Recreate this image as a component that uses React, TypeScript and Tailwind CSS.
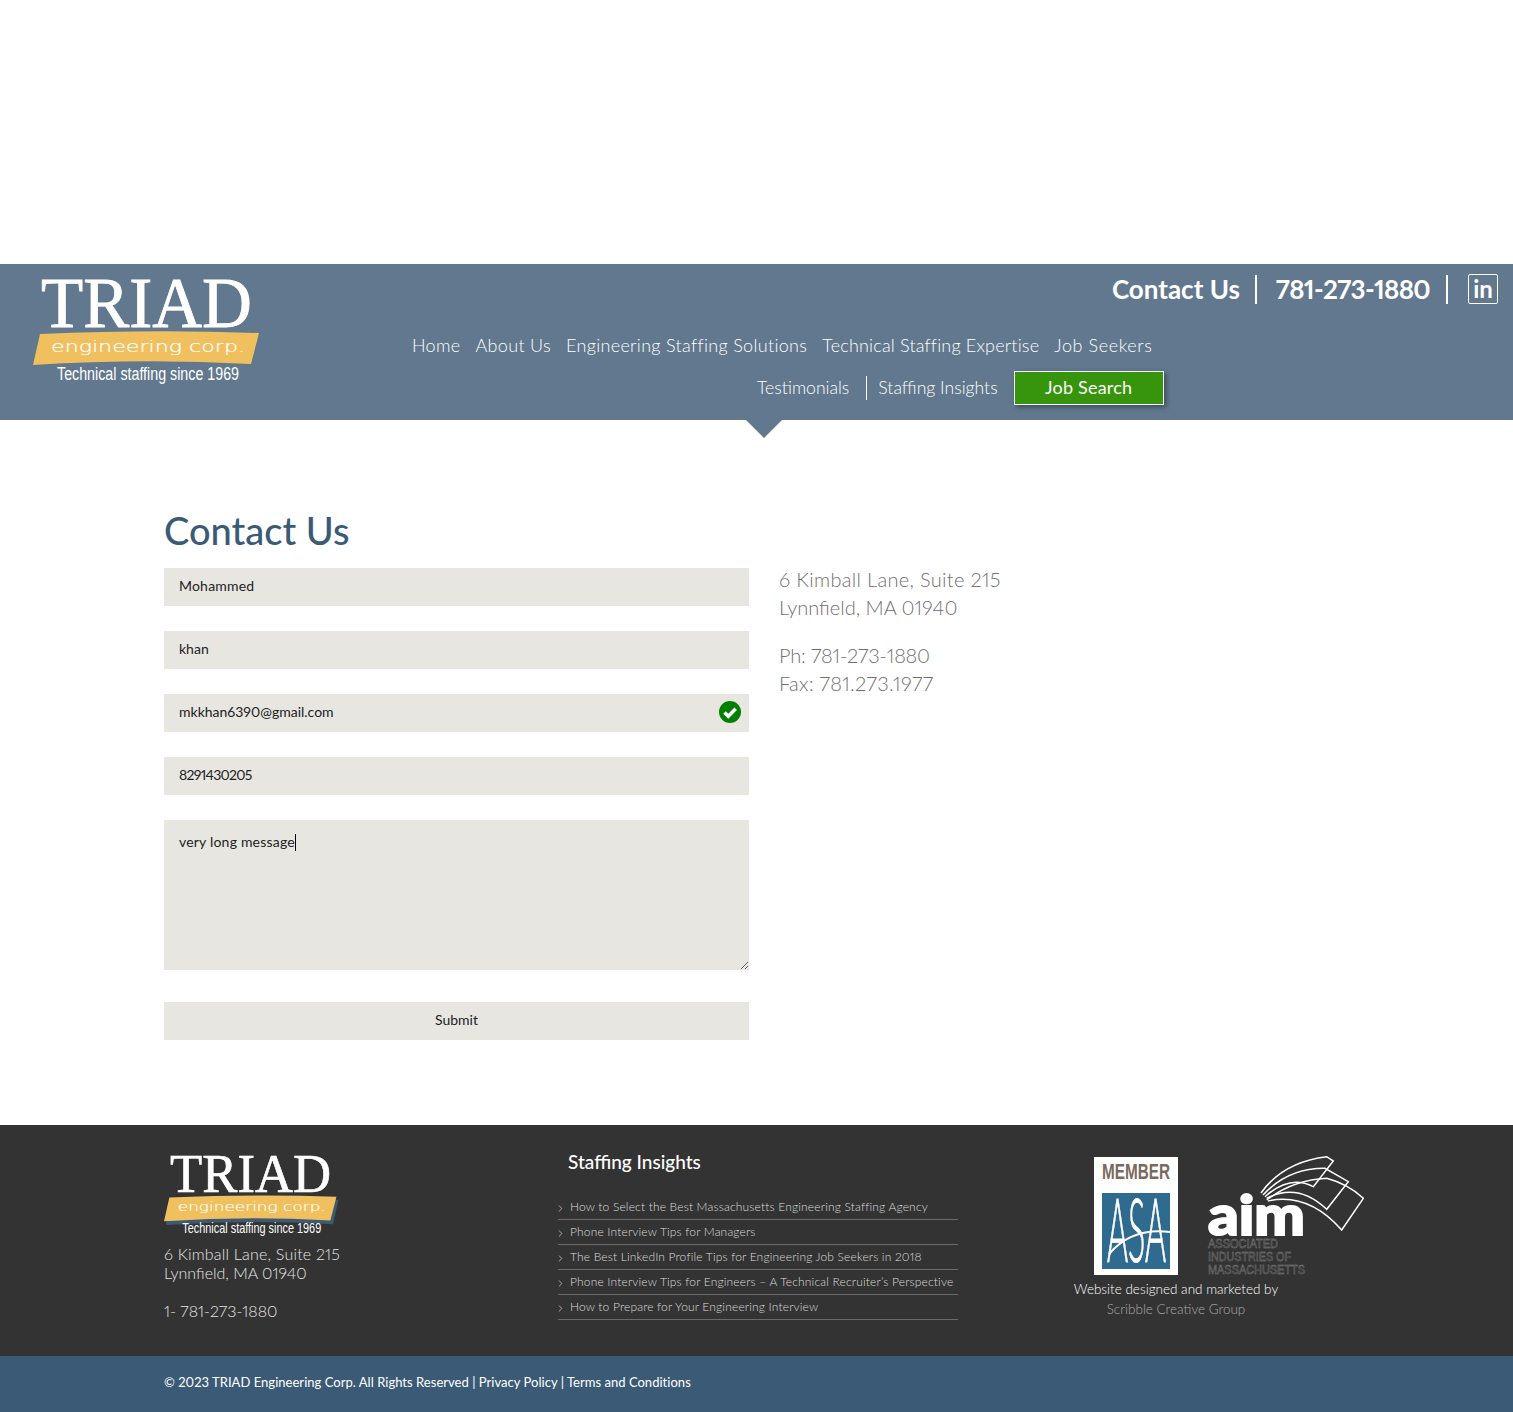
import { ChevronRight } from 'lucide-react'

const nav = [
  { label: 'Home', spacing: 'tracking-[0.32px]' },
  { label: 'About Us', spacing: 'tracking-[0.32px]' },
  { label: 'Engineering Staffing Solutions', spacing: 'tracking-[0.32px]' },
  { label: 'Technical Staffing Expertise', spacing: 'tracking-[0.18px]' },
  { label: 'Job Seekers', spacing: 'tracking-[0.6px]' },
]

const posts = [
  'How to Select the Best Massachusetts Engineering Staffing Agency',
  'Phone Interview Tips for Managers',
  'The Best LinkedIn Profile Tips for Engineering Job Seekers in 2018',
  'Phone Interview Tips for Engineers – A Technical Recruiter’s Perspective',
  'How to Prepare for Your Engineering Interview',
]

const inputClass = 'block h-[38px] w-[585px] bg-[#e7e6e1] px-[15px] pb-[4px] text-[14px] text-[#222] outline-none'

function Logo({ width, shadow }: { width: number; shadow?: boolean }) {
  return (
    <svg width={width} viewBox="0 0 228 106" className="block shrink-0 overflow-visible">
      <text x="8" y="50" fill="#fff" stroke="#fff" strokeWidth="0.8" fontFamily="Liberation Serif" fontSize="71" textLength="211" lengthAdjust="spacingAndGlyphs">TRIAD</text>
      {shadow && <path d="M7 58 Q120 53 227 57 L220 89 Q110 83 1 90 Z" fill="#3b5a75" transform="translate(1.5 3)" />}
      <path d="M7 57 Q120 52 226 56 L218 87 Q110 81 0 88 Z" fill="#f0c05e" />
      <text x="18" y="75" fill="#fff" stroke="#fff" strokeWidth="0.2" fontFamily="DejaVu Sans" fontSize="16" textLength="194" lengthAdjust="spacingAndGlyphs" fontWeight="200">engineering corp.</text>
      <text x="24" y="103" fill="#fff" fontFamily="Liberation Sans" fontSize="18" textLength="182" lengthAdjust="spacingAndGlyphs">Technical staffing since 1969</text>
    </svg>
  )
}

function AsaBadge() {
  return (
    <svg width="84" height="118" viewBox="0 0 84 118" className="mt-[3px] block shrink-0 overflow-visible">
      <rect width="84" height="118" fill="#fff" />
      <text x="8" y="22" fill="#7a6a5e" fontFamily="Liberation Sans" fontWeight="700" fontSize="22" textLength="68" lengthAdjust="spacingAndGlyphs">MEMBER</text>
      <rect x="8" y="36" width="68" height="76" fill="#2f6a8f" />
      <text x="13" y="105" fill="#fff" stroke="#fff" strokeWidth="0.9" fontFamily="Lato" fontWeight="300" fontSize="89" textLength="59" lengthAdjust="spacingAndGlyphs">ASA</text>
      <path d="M15 97 Q38 70 76 75" fill="none" stroke="#fff" strokeWidth="2" />
    </svg>
  )
}

function AimLogo() {
  return (
    <svg width="158" height="122" viewBox="0 0 158 122" className="block shrink-0 overflow-visible">
      <g fill="none" stroke="#fff" strokeWidth="1.5">
        <path d="M53 39 Q75 8 118.7 2.7 L125.3 7 L105.3 32.7 Q82 20 57 42.7" />
        <path d="M55 41 Q80 14 117 14.3 L140.3 27.7 L118.7 55.3 Q90 28 58.7 44.3" />
        <path d="M58.7 46 Q85 26 118.7 24.3 Q140 30 155.3 44.3 L133.7 76 Q100 38 60 47" />
      </g>
      <text x="0" y="81" fill="#fff" stroke="#fff" strokeWidth="2" fontFamily="Lato" fontWeight="900" fontSize="56" textLength="97" lengthAdjust="spacingAndGlyphs">aim</text>
      <g fill="none" stroke="#8a8a8a" strokeWidth="0.4" fontFamily="Liberation Sans" fontSize="12">
        <text x="0" y="94" textLength="70" lengthAdjust="spacingAndGlyphs">ASSOCIATED</text>
        <text x="0" y="107" textLength="83" lengthAdjust="spacingAndGlyphs">INDUSTRIES OF</text>
        <text x="0" y="120" textLength="97" lengthAdjust="spacingAndGlyphs">MASSACHUSETTS</text>
      </g>
    </svg>
  )
}

export default function App() {
  return (
    <div className="bg-white font-['Lato',sans-serif] proportional-nums">
      <div className="h-[264px]" />

      {/* Header */}
      <header className="relative flex h-[156px] bg-[#61788e] text-white">
        <div className="w-[412px] shrink-0 pl-[33px] pt-[13px]">
          <Logo width={228} />
        </div>
        <div className="flex-1 pt-[10px]">
          <div className="flex h-[30px] items-center justify-end pr-[15px]">
            <a className="text-[26px] font-bold">Contact Us</a>
            <span className="ml-[15px] mr-[19px] h-[29px] w-[2px] bg-white" />
            <a className="text-[26px] font-bold tracking-[-0.65px]">781-273-1880</a>
            <span className="ml-[16px] mr-[20px] h-[29px] w-[2px] bg-white" />
            <a className="flex h-[30px] w-[30px] items-center justify-center rounded-[2px] border border-white text-[24px] font-bold">in</a>
          </div>
          <nav className="mt-[27px] flex h-[28px] items-center gap-[15px] text-[18px] font-light">
            {nav.map((n) => <a key={n.label} className={n.spacing}>{n.label}</a>)}
          </nav>
          <div className="mt-[12px] flex h-[34px] items-center pl-[345px] text-[17.6px] font-light">
            <a>Testimonials</a>
            <span className="ml-[17px] mr-[11px] h-[24px] w-px bg-white" />
            <a>Staffing Insights</a>
            <a className="ml-[16px] flex h-[34px] w-[150px] items-center justify-center border border-white bg-[#37950d] pb-[2px] text-[18px] font-normal tracking-[0.2px] shadow-[2px_2px_5px_rgba(0,0,0,0.4)]">Job Search</a>
          </div>
        </div>
        <span className="absolute left-[746px] top-full h-0 w-0 border-x-[18px] border-t-[18px] border-x-transparent border-t-[#61788e]" />
      </header>

      {/* Content */}
      <main className="h-[705px] pl-[164px] pt-[88px]">
        <h1 className="text-[38px] font-medium leading-[44px] text-[#3b5a75]">Contact Us</h1>
        <div className="mt-[16px] flex gap-[30px]">
          <form className="flex w-[585px] flex-col gap-[25px]">
            <input className={`${inputClass} tracking-[0.2px]`} defaultValue="Mohammed" />
            <input className={inputClass} defaultValue="khan" />
            <div className="relative">
              <input className={inputClass} defaultValue="mkkhan6390@gmail.com" />
              <svg width="24" height="24" viewBox="0 0 24 24" className="absolute right-[7px] top-[6px]">
                <circle cx="12" cy="12" r="11" fill="#008000" />
                <path d="M6.5 12.5l3.8 3.8 7.4-7.6" fill="none" stroke="#fff" strokeWidth="3.5" />
              </svg>
            </div>
            <input className={`${inputClass} tracking-[-0.7px]`} defaultValue="8291430205" />
            <div className="relative h-[150px]">
              <textarea className="block h-[150px] w-[585px] bg-[#e7e6e1] px-[15px] py-[12px] text-[14px] leading-[20px] tracking-[0.2px] text-[#222] outline-none" defaultValue="very long message" />
              <span className="absolute left-[131px] top-[14px] h-[17px] w-px bg-black" />
            </div>
            <button type="button" className="mt-[7px] h-[38px] w-[585px] bg-[#e7e6e1] pb-[4px] text-[14px] text-[#222]">Submit</button>
          </form>
          <div className="-mt-[3px] text-[20px] font-light leading-[28px] text-[#6f6f6f]">
            <p className="tracking-[0.32px]">6 Kimball Lane, Suite 215</p>
            <p>Lynnfield, MA 01940</p>
            <p className="mt-[20px] tracking-[-0.2px]">Ph: 781-273-1880</p>
            <p className="tracking-[0.3px]">Fax: 781.273.1977</p>
          </div>
        </div>
      </main>

      {/* Footer */}
      <footer className="flex h-[231px] bg-[#333] pl-[164px] pt-[30px] text-white">
        <div className="w-[394px] shrink-0">
          <div className="-mt-px">
            <Logo width={174} shadow />
          </div>
          <p className="mt-[9px] text-[16px] font-light leading-[19px] tracking-[0.2px] text-[#e5e5e5]">6 Kimball Lane, Suite 215</p>
          <p className="text-[16px] font-light leading-[19px] text-[#e5e5e5]">Lynnfield, MA 01940</p>
          <p className="mt-[19px] text-[16px] font-light leading-[19px] text-[#e5e5e5]">1- 781-273-1880</p>
        </div>
        <div className="w-[400px] shrink-0">
          <h3 className="pl-[10px] text-[19px] font-medium leading-[14px]">Staffing Insights</h3>
          <ul className="mt-[26px]">
            {posts.map((p) => (
              <li key={p} className="relative flex h-[25px] items-center border-b border-[#6b6b6b] pl-[12px] text-[12px] font-light tracking-[0.17px] text-[#dcdcdc]">
                <ChevronRight className="absolute left-[-3px] top-[8px] h-[11px] w-[11px]" strokeWidth={1.5} />
                {p}
              </li>
            ))}
          </ul>
        </div>
        <div className="ml-[115px] w-[300px] shrink-0">
          <div className="-mt-px flex items-start gap-[30px] pl-[21px]">
            <AsaBadge />
            <AimLogo />
          </div>
          <p className="mt-[5px] w-[206px] whitespace-nowrap text-center text-[13.5px] font-light leading-[17px]">Website designed and marketed by</p>
          <p className="mt-[3px] w-[206px] text-center text-[13.5px] font-light leading-[17px] text-[#aaa]">Scribble Creative Group</p>
        </div>
      </footer>
      <div className="flex h-[56px] items-center bg-[#3b5a75] pb-[2px] pl-[164px] text-[13px] font-normal tracking-[0.03px] text-white">
        © 2023 TRIAD Engineering Corp. All Rights Reserved | Privacy Policy | Terms and Conditions
      </div>
    </div>
  )
}
